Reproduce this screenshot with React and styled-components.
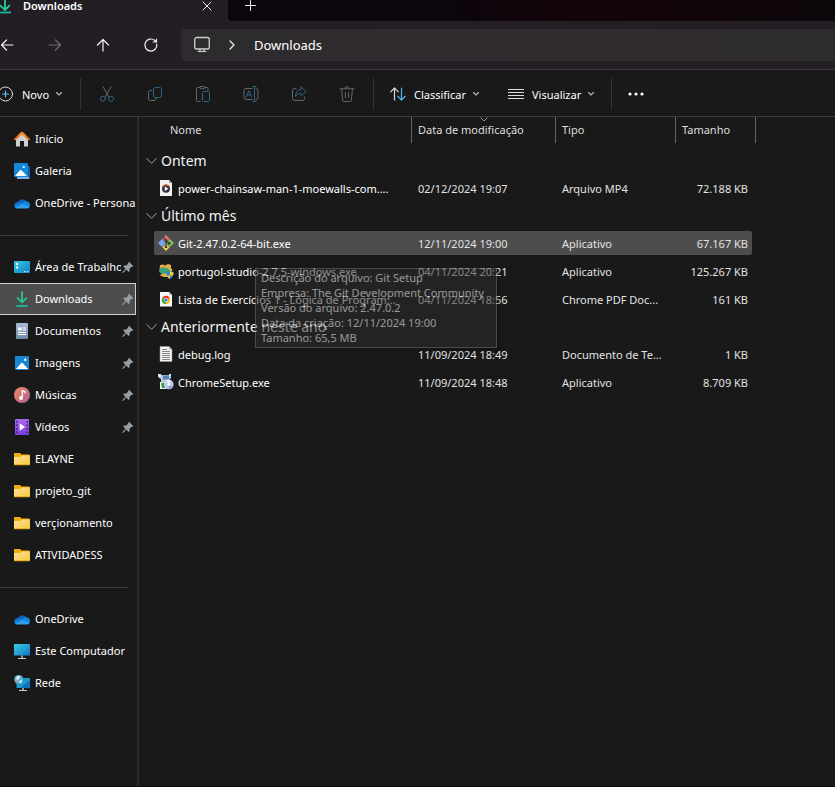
import React from "react";
import styled, { createGlobalStyle, css } from "styled-components";

const GlobalStyle = createGlobalStyle`
  * { box-sizing: border-box; }
  body {
    margin: 0;
    background: #191919;
    color: #ffffff;
    font-family: "Noto Sans", "Open Sans", sans-serif;
    font-size: 11px;
    line-height: 16px;
    overflow: hidden;
  }
  button {
    margin: 0;
    padding: 0;
    border: 0;
    background: none;
    color: inherit;
    font: inherit;
    cursor: default;
  }
  a { color: inherit; text-decoration: none; }
  svg { display: block; flex: none; }
`;

/* ---------- layout ---------- */

const Window = styled.div`
  min-height: 100vh;
  display: flex;
  flex-direction: column;
  border-bottom: 1px solid #0b0b0b;
`;

const TabStrip = styled.header`
  height: 21px;
  display: flex;
  background: #221e23;
`;

const Tab = styled.div`
  flex: none;
  width: 228px;
  height: 12px;
  padding: 0 14px 0 0;
  display: flex;
  align-items: center;
`;

const TabTitle = styled.span`
  flex: 1;
  margin-left: 11px;
  font-size: 11px;
  font-weight: 600;
`;

const TabRest = styled.div`
  flex: 1;
  padding: 0 15px;
  border-bottom-left-radius: 4px;
  background: linear-gradient(90deg, #0b060d 0%, #0c050c 35%, #130409 60%, #0c060a 100%);
`;

const StripButton = styled.button`
  width: 14px;
  height: 11px;
  display: grid;
  place-items: center;
`;

const NavBar = styled.div`
  height: 49px;
  padding: 8px 0;
  display: flex;
  align-items: center;
  border-bottom: 1px solid #3b3a3b;
  background: #221e23;
`;

const NavButtons = styled.div`
  width: 181px;
  display: flex;
  margin-left: -17px;
  margin-right: 17px;
`;

const SquareButton = styled.button`
  flex: none;
  width: 48px;
  height: 32px;
  display: grid;
  place-items: center;
  color: #f2f2f2;

  &:disabled { color: ${(p) => (p.$tinted ? "#666666" : "#6f6b70")}; }
`;

const AddressBar = styled.div`
  flex: 1;
  height: 32px;
  padding-left: 12px;
  display: flex;
  align-items: center;
  border-radius: 5px 0 0 5px;
  background: linear-gradient(90deg, #2d2b2e 0%, #322c2f 60%, #2d2c2d 100%);
  font-size: 13px;
`;

const Crumb = styled.button`
  margin-left: 19px;
`;

const CrumbChevron = styled.span`
  margin-left: 18px;
`;

const Toolbar = styled.div`
  height: 47px;
  padding-top: 2px;
  display: flex;
  align-items: center;
  border-bottom: 1px solid #3b3b3b;
  background: #191919;
`;

const ToolButton = styled.button`
  flex: none;
  width: ${(p) => p.$width}px;
  height: 32px;
  padding-left: ${(p) => p.$inset}px;
  display: flex;
  align-items: center;
  gap: 8px;

  svg:last-child { margin-left: -2px; }
`;

const ToolLabel = styled.span`
  padding-top: 2px;
`;

const Clip = styled.div`
  margin-left: -2px;
  display: flex;
`;

const Separator = styled.div`
  flex: none;
  width: 1px;
  height: 32px;
  background: #333333;
`;

const IconGroup = styled.div`
  display: flex;
  padding: 0 2px;
`;

const Body = styled.div`
  flex: 1;
  display: flex;
`;

/* ---------- sidebar ---------- */

const Sidebar = styled.nav`
  flex: none;
  width: 139px;
  margin-right: 1px;
  padding: 6px 1px 0 0;
  border-right: 2px solid #2b2b2b;
`;

const SideItem = styled.a`
  height: 32px;
  padding: 0 2px 0 14px;
  display: flex;
  align-items: center;
  gap: 5px;
  ${(p) =>
    p.$selected &&
    css`
      padding-right: 1px;
      border: 1px solid #d0d0d0;
      border-left: 0;
      background: #4d4d4d;
    `}
`;

const SideLabel = styled.span`
  flex: 1;
  min-width: 0;
  margin-right: ${(p) => (p.$bleed ? "-2px" : "0")};
  overflow: hidden;
  white-space: nowrap;
`;

const SideRule = styled.hr`
  height: 1px;
  margin: 16px 8px 15px 0;
  border: 0;
  background: #3b3b3b;
`;

const PinSlot = styled.span`
  margin-left: -4px;
`;

/* ---------- file list ---------- */

const Pane = styled.main`
  position: relative;
  flex: 1;
  min-width: 0;
`;

const FileTable = styled.table`
  display: block;
  color: #e2e2e2;
`;

const TableHead = styled.thead`
  display: block;
`;

const HeadRow = styled.tr`
  display: grid;
  grid-template-columns: 272px 144px 120px 80px;
  height: 26px;
  margin-bottom: 4px;
`;

const HeadCell = styled.th`
  position: relative;
  padding: 5px 0 0 ${(p) => (p.$first ? "30px" : "6px")};
  border-right: 1px solid #636363;
  font-weight: 400;
  text-align: left;
  color: #dedede;
`;

const SortMark = styled.span`
  position: absolute;
  top: 0;
  left: 50%;
  margin-left: -4px;
`;

const Group = styled.tbody`
  display: flex;
  flex-direction: column;
`;

const GroupRow = styled.tr`
  display: flex;
  height: 27px;
`;

const GroupCell = styled.th`
  padding: 0 0 0 6px;
  font-weight: 400;
`;

const GroupButton = styled.button`
  height: 27px;
  display: flex;
  align-items: center;
  gap: 4px;
  font-size: 14px;
  white-space: nowrap;
  color: #f4f4f4;
`;

const FileRow = styled.tr`
  display: grid;
  grid-template-columns: 258px 144px 120px 76px;
  align-items: center;
  width: 598px;
  height: 24px;
  margin: 2px 0 2px 14px;
  border-radius: 2px;
  background: ${(p) => (p.$hovered ? "#4d4d4d" : "transparent")};
`;

const Cell = styled.td`
  padding: 2px ${(p) => (p.$right ? "4px" : "10px")} 0 6px;
  overflow: hidden;
  text-overflow: ellipsis;
  white-space: nowrap;
  text-align: ${(p) => (p.$right ? "right" : "left")};
`;

const NameCell = styled.td`
  min-width: 0;
  padding: 0 10px 0 4px;
  display: flex;
  align-items: center;
  gap: 4px;
  color: #ffffff;
`;

const FileName = styled.span`
  padding-top: 2px;
  overflow: hidden;
  text-overflow: ellipsis;
  white-space: nowrap;
`;

const Tooltip = styled.div`
  position: absolute;
  left: 115px;
  top: 151px;
  width: 242px;
  padding: 1px 5px 2px;
  border: 1px solid #767676;
  background: #2c2c2c;
  opacity: 0.54;
  box-shadow: 2px 2px 3px rgba(0, 0, 0, 0.5);
  line-height: 15px;
  white-space: nowrap;
`;

/* ---------- icons ---------- */

const Line = ({ size = 16, w, h, children, ...rest }) => (
  <svg
    width={w || size}
    height={h || size}
    viewBox={`0 0 ${w || size} ${h || size}`}
    fill="none"
    stroke="currentColor"
    strokeLinecap="round"
    strokeLinejoin="round"
    aria-hidden="true"
    {...rest}
  >
    {children}
  </svg>
);

const DownloadArrow = () => (
  <Line>
    <path d="M8 1v10.2M3.6 7.2 8 11.4l4.4-4.2" stroke="#24c494" strokeWidth="1.8" />
    <path d="M2.4 15h11.2" stroke="#19b79f" strokeWidth="1.8" strokeLinecap="butt" />
  </Line>
);

const TabDownload = () => (
  <Line w={12} h={16} viewBox="4 0 12 16">
    <path d="M9 0v11M4.4 7.6 9 12l4.4-4.4" stroke="#24c494" strokeWidth="1.9" />
    <path d="M3 14.500h12" stroke="#19b79f" strokeWidth="1.8" strokeLinecap="butt" />
  </Line>
);

const Close = () => (
  <Line size={10}><path d="M1 1l8 8M9 1L1 9" stroke="#e8e8e8" /></Line>
);
const Plus = () => (
  <Line size={11}><path d="M5.5 .5v10M.5 5.5h10" stroke="#e8e8e8" /></Line>
);
const ArrowLeft = () => (
  <Line><path d="M14 8H2.5M7.5 3l-5 5 5 5" strokeWidth="1.2" /></Line>
);
const ArrowRight = () => (
  <Line><path d="M2 8h11.5M8.5 3l5 5-5 5" strokeWidth="1.2" /></Line>
);
const ArrowUp = () => (
  <Line><path d="M8 14V2.5M2.5 8L8 2.5 13.5 8" strokeWidth="1.2" /></Line>
);
const Refresh = () => (
  <Line>
    <path d="M13.8 7.2A6 6 0 1 1 11.8 3.5l1.5 1.3M13.5 2v3h-3.3" strokeWidth="1.2" />
  </Line>
);
const Monitor = () => (
  <Line w={18} h={18}>
    <rect x="1.7" y="1.5" width="14.6" height="11.5" rx="2" stroke="#cfcdd0" strokeWidth="1.3" />
    <path d="M7 13.2v2.5M11 13.200v2.5M5 15.500h8" stroke="#cfcdd0" strokeWidth="1.2" />
  </Line>
);
const ChevronRight = () => (
  <Line w={6} h={10}><path d="M1 1l4 4-4 4" stroke="#ededed" strokeWidth="1.3" /></Line>
);
const ChevronDown = () => (
  <Line w={8} h={6}><path d="M1.5 1.5L4 4l2.5-2.5" stroke="#b4b4b4" strokeWidth="1.1" /></Line>
);
const GroupChevron = () => (
  <Line w={11} h={8}><path d="M.7 1.5l4.8 4.8 4.8-4.8" stroke="#a4a4a4" /></Line>
);
const SortDown = () => (
  <Line w={8} h={5}><path d="M.8.8L4 4 7.2.8" stroke="#8e8e8e" /></Line>
);
const NewIcon = () => (
  <Line>
    <circle cx="7.500" cy="8" r="7" stroke="#dedede" />
    <path d="M7.500 5v6M4.500 8h6" stroke="#58c0ee" strokeWidth="1.2" />
  </Line>
);
const Cut = () => (
  <Line>
    <path d="M4 .7l5.600 10M12 .7l-5.600 10" />
    <circle cx="3.800" cy="12.800" r="2.500" stroke="#2f6380" />
    <circle cx="12.200" cy="12.800" r="2.500" stroke="#2f6380" />
  </Line>
);
const Copy = () => (
  <Line>
    <path d="M5 4.500H3.500a2 2 0 0 0-2 2v6a2 2 0 0 0 2 2H7a2 2 0 0 0 2-2V12" />
    <rect x="6.500" y="1.500" width="8" height="10" rx="2" stroke="#2f6380" />
  </Line>
);
const Paste = () => (
  <Line>
    <path d="M5 15.500H2.500a1 1 0 0 1-1-1v-12a1 1 0 0 1 1-1H5M10 1.500h2a1 1 0 0 1 1 1V4" />
    <rect x="4.800" y=".5" width="5.400" height="2.200" rx="1" />
    <rect x="7.500" y="5.500" width="7" height="10" rx="1" stroke="#2f6380" />
  </Line>
);
const Rename = () => (
  <Line>
    <path d="M9 2.500H3a2 2 0 0 0-2 2v7a2 2 0 0 0 2 2h6M13 2.500a2 2 0 0 1 2 2v7a2 2 0 0 1-2 2" />
    <path d="M11.500 1v14M9.800.6h3.400M9.800 15.400h3.400M3.300 11L6 4.500 8.700 11M4.200 9h3.600" stroke="#2f6380" />
  </Line>
);
const Share = () => (
  <Line>
    <path d="M5 2.500H3.500a2 2 0 0 0-2 2v8a2 2 0 0 0 2 2h8a2 2 0 0 0 2-2V11" />
    <path d="M10 .800l5.200 4.700-5.200 4.700V7.500C7.500 7.300 5.700 8.500 4.500 10.500c0-3.800 2-6.800 5.500-7.200z" stroke="#2f6380" />
  </Line>
);
const Trash = () => (
  <Line>
    <path d="M1 2.800h14M5.800 2.600a2.200 1.900 0 0 1 4.400 0M2.600 3l1 11.200a1.400 1.400 0 0 0 1.400 1.300h6a1.400 1.400 0 0 0 1.400-1.300L13.400 3M6.500 6.500v5M9.500 6.500v5" />
  </Line>
);
const Sort = () => (
  <Line>
    <path d="M4.500 14V2M.7 5.800L4.500 2l3.800 3.800" stroke="#d6d6d6" strokeWidth="1.2" />
    <path d="M11.500 2v12M7.700 10.200l3.800 3.800 3.800-3.800" stroke="#4fb8ea" strokeWidth="1.2" />
  </Line>
);
const Lines = () => (
  <Line>
    <path d="M0 3.500h16M0 6.500h16M0 9.500h16M0 12.500h16" stroke="#dddddd" strokeLinecap="butt" />
  </Line>
);
const Dots = () => (
  <Line w={18} h={4}>
    <g fill="#ffffff" stroke="none">
      <circle cx="3" cy="2" r="1.600" />
      <circle cx="9" cy="2" r="1.600" />
      <circle cx="15" cy="2" r="1.600" />
    </g>
  </Line>
);

const Art = ({ children }) => (
  <svg width="16" height="16" viewBox="0 0 16 16" aria-hidden="true">{children}</svg>
);

const Home = () => (
  <Art>
    <path d="M2 7.500L8 2l6 5.500V15a.6.6 0 0 1-.6.600H10V10H6v5.600H2.600A.6.6 0 0 1 2 15z" fill="#cfcfcf" />
    <path d="M1 8.300L8 1.700l7 6.600" fill="none" stroke="#ea6a1c" strokeWidth="2" strokeLinecap="round" strokeLinejoin="round" />
    <path d="M4.500 5L8 1.700 11.500 5" fill="none" stroke="#f58a1f" strokeWidth="2" strokeLinejoin="round" />
  </Art>
);
const Gallery = () => (
  <Art>
    <path d="M3 3h12a1 1 0 0 1 1 1v11a1 1 0 0 1-1 1H4a1 1 0 0 1-1-1z" fill="#0e5fae" />
    <path d="M3 14h12v2H4a1 1 0 0 1-1-1z" fill="#7fb0e6" />
    <rect width="14" height="14" rx="1" y="0" fill="#1488d8" />
    <path d="M1 13l5.200-6 1 .1L13 13z" fill="#ffffff" />
    <circle cx="9.800" cy="4" r="1.100" fill="#ffffff" />
  </Art>
);
const Cloud = () => (
  <Art>
    <path d="M3.500 8A5 5 0 0 1 12.500 6.600L11 11H3z" fill="#0a63b8" />
    <path d="M3.800 6.900A3.600 3.600 0 0 0 1 12.500L9.500 9z" fill="#1279d2" />
    <path d="M12.200 6.500a3.500 3.500 0 0 1 3.600 4.600l-3 1.400L6 8.700c2-.2 3.800-2.400 6.200-2.200z" fill="#1886dc" />
    <path d="M.8 12.200L8.600 8.900l7.200 2.500a2.700 2.700 0 0 1-2.500 2.100H3.600a3.300 3.300 0 0 1-2.800-1.300z" fill="#2aa4f0" />
  </Art>
);
const Desktop = () => (
  <Art>
    <defs>
      <linearGradient id="desk" x1="0" y1="0" x2="1" y2="1">
        <stop offset="0" stopColor="#35c8de" />
        <stop offset="1" stopColor="#1481c8" />
      </linearGradient>
    </defs>
    <rect y="2" width="16" height="12" rx="1" fill="url(#desk)" />
    <path d="M2 4h2v2H2zM2 7.500h2v2H2z" fill="#ffffff" />
    <path d="M10 12h1.500v1.200H10zM13 12h1.500v1.200H13z" fill="#c9e8f8" />
  </Art>
);
const Documents = () => (
  <Art>
    <defs>
      <linearGradient id="doc" x1="0" y1="0" x2="0" y2="1">
        <stop offset="0" stopColor="#a9bdd2" />
        <stop offset="1" stopColor="#6d88a8" />
      </linearGradient>
    </defs>
    <rect x="2" width="12" height="16" rx="1" fill="url(#doc)" />
    <path d="M4 4.500h3.500v3H4z" fill="#ffffff" />
    <path d="M8.500 5H12M8.500 7H12M4 9.500h8M4 11.500h8" stroke="#ffffff" />
  </Art>
);
const Images = () => (
  <Art>
    <rect x="1" y="1" width="14" height="14" rx="1" fill="#1787d6" />
    <path d="M2 14l5.300-6h1.400L14 14z" fill="#ffffff" />
    <circle cx="11.300" cy="4.700" r="1.200" fill="#ffffff" />
  </Art>
);
const Music = () => (
  <Art>
    <defs>
      <linearGradient id="mus" x1="0" y1="0" x2="1" y2="1">
        <stop offset="0" stopColor="#ee8a55" />
        <stop offset="1" stopColor="#b0609f" />
      </linearGradient>
    </defs>
    <circle cx="8" cy="8" r="8" fill="url(#mus)" />
    <circle cx="7" cy="11" r="1.900" fill="#ffffff" />
    <path d="M8.300 11V3.600l2.700 1v1.600" fill="none" stroke="#ffffff" strokeWidth="1.300" />
  </Art>
);
const Videos = () => (
  <Art>
    <defs>
      <linearGradient id="vid" x1="0" y1="0" x2="0" y2="1">
        <stop offset="0" stopColor="#a869ee" />
        <stop offset="1" stopColor="#7c3fd8" />
      </linearGradient>
    </defs>
    <rect x="1" width="14" height="16" rx="1" fill="url(#vid)" />
    <path d="M2 2h1.500v1.500H2zM2 5.500h1.500V7H2zM2 9h1.500v1.500H2zM2 12.500h1.500V14H2zM12.500 2H14v1.500h-1.500zM12.500 5.500H14V7h-1.500zM12.500 9H14v1.500h-1.500zM12.500 12.500H14V14h-1.500z" fill="#3c1c80" />
    <path d="M5.700 4.300L11 8l-5.300 3.700z" fill="#ffffff" />
  </Art>
);
const Folder = () => (
  <Art>
    <defs>
      <linearGradient id="fold" x1="0" y1="0" x2="1" y2="1">
        <stop offset="0" stopColor="#ffe39a" />
        <stop offset="1" stopColor="#fbc63c" />
      </linearGradient>
    </defs>
    <path d="M0 3a1 1 0 0 1 1-1h5l1.500 1.500H15a1 1 0 0 1 1 1V8H0z" fill="#f2ab12" />
    <path d="M0 6h6.500L8 4.500h7a1 1 0 0 1 1 1V13a1 1 0 0 1-1 1H1a1 1 0 0 1-1-1z" fill="url(#fold)" />
    <path d="M0 13a1 1 0 0 0 1 1.300h14a1 1 0 0 0 1-1z" fill="#e9a920" />
  </Art>
);
const Computer = () => (
  <Art>
    <defs>
      <linearGradient id="pc" x1="0" y1="0" x2="1" y2="1">
        <stop offset="0" stopColor="#38d0e4" />
        <stop offset="1" stopColor="#1173c4" />
      </linearGradient>
    </defs>
    <rect y="1" width="16" height="11.500" rx=".6" fill="url(#pc)" />
    <path d="M7 12.500h2V15H7z" fill="#8f9aa3" />
    <path d="M4 15h8v1H4z" fill="#c2ccd4" />
  </Art>
);
const Network = () => (
  <Art>
    <rect x="2.500" y="3" width="13.500" height="10" rx=".6" fill="#1b9bd0" />
    <path d="M16 5v8H6z" fill="#1273bd" />
    <path d="M8 13h2v2H8z" fill="#8f9aa3" />
    <path d="M5 15h8v1H5z" fill="#c2ccd4" />
    <circle cx="4.700" cy="4.500" r="4.500" fill="#6fa9c9" />
    <path d="M2 2.200c1.500-1.500 3-1.500 4-1L5.500 3.500 3 5.500zM5 6l2.800-1L8 6.800 6 8.500z" fill="#d7ebf5" />
  </Art>
);
const Pin = () => (
  <svg width="12" height="12" viewBox="0 0 12 12" aria-hidden="true">
    <path d="M7 .8L11.200 5l-.9.900-.8-.2-2 2 .1 2.200-1 1-2.300-2.300L1 12l-.8-.2.2-.8 3.100-3.300L1.200 5.400l1-1 2.200.1 2-2-.3-.8z" fill="#96a0a8" />
  </svg>
);
const Mp4 = () => (
  <Art>
    <path d="M2 0h9l3 3v13H2z" fill="#f2f2f2" />
    <path d="M11 0v3h3z" fill="#9b9b9b" />
    <circle cx="8" cy="8.800" r="4" fill="#34323e" />
    <path d="M4.500 7a4 4 0 0 1 6-1.300" stroke="#e2643d" fill="none" strokeWidth="1.300" />
    <path d="M6.800 6.600l3.600 2.200-3.600 2.200z" fill="#ffffff" />
  </Art>
);
const GitIcon = () => (
  <Art>
    <path d="M8 0l3.700 3.700L8 7.400 4.300 3.700z" fill="#f07068" />
    <path d="M4 4l3.700 4L4 12 0 8z" fill="#74a8f2" />
    <path d="M12 4l4 4-4 4-3.700-4z" fill="#7cc65c" />
    <path d="M8 8.600l3.700 3.700L8 16l-3.700-3.700z" fill="#f3cf5b" />
    <path d="M5.500 2.500L8 5v7M8 5.500l3.200 3" fill="none" stroke="#3a3a3a" strokeWidth="1.200" />
    <circle cx="8" cy="5.200" r="1.300" fill="#3a3a3a" />
    <circle cx="11.400" cy="8.400" r="1.300" fill="#3a3a3a" />
    <circle cx="8" cy="12" r="1.300" fill="#3a3a3a" />
  </Art>
);
const Portugol = () => (
  <Art>
    <path d="M2 2l3.500-.5 1.500 1L10 1l3 1v3l1.500 2-1 2 1 5L6 14l-4-1.500L4 10 1.500 8z" fill="#e8ab4a" />
    <path d="M1.500 6.500C3 4 6 3.500 8 5.500l2-.5 3.500 5-3 1.500-3-1L4 11 1 9z" fill="#3ba276" />
    <path d="M8.500 9.500L12 8.500l3.500 1c0 3-1 5.200-3.500 6.500-2.500-1.300-3.500-3.500-3.500-6.500z" fill="#2b84d8" />
    <path d="M12 8.500l3.500 1c0 1.200-.1 2-.5 3h-3zM8.900 12.500H12V16c-1.700-.9-2.700-2-3.100-3.500z" fill="#f7cf2e" />
  </Art>
);
const ChromePdf = () => (
  <Art>
    <path d="M2 1h9l3 3v11.500H2z" fill="#f7f7f7" />
    <path d="M11 1v3h3z" fill="#c6c6c6" />
    <circle cx="8" cy="9" r="4.200" fill="#fbc116" />
    <path d="M8 9L4.400 6.800A4.200 4.200 0 0 1 11.700 7z" fill="#e33b2e" />
    <path d="M8 9l-3.700-2A4.200 4.200 0 0 0 7.600 13.200z" fill="#2da94f" />
    <circle cx="8" cy="9" r="2.100" fill="#ffffff" />
    <circle cx="8" cy="9" r="1.600" fill="#3277e0" />
  </Art>
);
const TextFile = () => (
  <Art>
    <path d="M2 .5h9l3 3v12H2z" fill="#f4f4f4" stroke="#9b9b9b" strokeWidth=".5" />
    <path d="M11 .5v3h3z" fill="#b8b8b8" />
    <path d="M4 3.500h5M4 5.500h8M4 7.500h8M4 9.500h8M4 11.500h8M4 13.500h8" stroke="#7c7c7c" strokeWidth=".9" />
  </Art>
);
const Installer = () => (
  <Art>
    <path d="M1 1h12v3l-2 2v6H3V5L1 4z" fill="#bccbd9" />
    <path d="M0 0h3v3H0zM11 0h2v2h-2z" fill="#dfe8ef" />
    <path d="M5 1.500h6v4H5z" fill="#4a85bd" />
    <path d="M2 8h6v7H2z" fill="#eef2f5" />
    <path d="M3 9.500l2.500-1.200L7 11v3H4z" fill="#3c9c4d" />
    <circle cx="10.800" cy="10.500" r="4.800" fill="#c3c9ef" />
    <path d="M10.800 10.500L8 6.600a4.800 4.800 0 0 1 5-.3z" fill="#e9f3fb" />
    <path d="M10.800 10.500l4.200 2.300a4.800 4.800 0 0 1-4.500 2.500z" fill="#8fa4dd" />
    <circle cx="10.800" cy="10.500" r="1.300" fill="#ffffff" />
  </Art>
);

/* ---------- data ---------- */

const sections = [
  [
    { icon: Home, label: "Início" },
    { icon: Gallery, label: "Galeria" },
    { icon: Cloud, label: "OneDrive - Persona", bleed: true },
  ],
  [
    { icon: Desktop, label: "Área de Trabalho", pinned: true },
    { icon: DownloadArrow, label: "Downloads", pinned: true, selected: true },
    { icon: Documents, label: "Documentos", pinned: true },
    { icon: Images, label: "Imagens", pinned: true },
    { icon: Music, label: "Músicas", pinned: true },
    { icon: Videos, label: "Vídeos", pinned: true },
    { icon: Folder, label: "ELAYNE" },
    { icon: Folder, label: "projeto_git" },
    { icon: Folder, label: "verçionamento" },
    { icon: Folder, label: "ATIVIDADESS" },
  ],
  [
    { icon: Cloud, label: "OneDrive" },
    { icon: Computer, label: "Este Computador" },
    { icon: Network, label: "Rede" },
  ],
];

const groups = [
  {
    title: "Ontem",
    files: [
      { icon: Mp4, name: "power-chainsaw-man-1-moewalls-com....", date: "02/12/2024 19:07", type: "Arquivo MP4", size: "72.188 KB" },
    ],
  },
  {
    title: "Último mês",
    files: [
      { icon: GitIcon, name: "Git-2.47.0.2-64-bit.exe", date: "12/11/2024 19:00", type: "Aplicativo", size: "67.167 KB", hovered: true },
      { icon: Portugol, name: "portugol-studio-2.7.5-windows.exe", date: "04/11/2024 20:21", type: "Aplicativo", size: "125.267 KB" },
      { icon: ChromePdf, name: "Lista de Exercícios 1 - Lógica de Program...", date: "04/11/2024 18:56", type: "Chrome PDF Doc...", size: "161 KB" },
    ],
  },
  {
    title: "Anteriormente neste ano",
    files: [
      { icon: TextFile, name: "debug.log", date: "11/09/2024 18:49", type: "Documento de Te...", size: "1 KB" },
      { icon: Installer, name: "ChromeSetup.exe", date: "11/09/2024 18:48", type: "Aplicativo", size: "8.709 KB" },
    ],
  },
];

const fileActions = [
  ["Recortar", Cut],
  ["Copiar", Copy],
  ["Colar", Paste],
  ["Renomear", Rename],
  ["Compartilhar", Share],
  ["Excluir", Trash],
];

const tooltipLines = [
  "Descrição do arquivo: Git Setup",
  "Empresa: The Git Development Community",
  "Versão do arquivo: 2.47.0.2",
  "Data da criação: 12/11/2024 19:00",
  "Tamanho: 65,5 MB",
];

/* ---------- app ---------- */

export default function App() {
  return (
    <Window>
      <GlobalStyle />
      <TabStrip>
        <Tab>
          <TabDownload />
          <TabTitle>Downloads</TabTitle>
          <StripButton aria-label="Fechar guia"><Close /></StripButton>
        </Tab>
        <TabRest>
          <StripButton aria-label="Nova guia"><Plus /></StripButton>
        </TabRest>
      </TabStrip>

      <NavBar>
        <NavButtons>
          <SquareButton aria-label="Voltar"><ArrowLeft /></SquareButton>
          <SquareButton aria-label="Avançar" disabled><ArrowRight /></SquareButton>
          <SquareButton aria-label="Acima"><ArrowUp /></SquareButton>
          <SquareButton aria-label="Atualizar"><Refresh /></SquareButton>
        </NavButtons>
        <AddressBar>
          <Monitor />
          <CrumbChevron><ChevronRight /></CrumbChevron>
          <Crumb>Downloads</Crumb>
        </AddressBar>
      </NavBar>

      <Toolbar>
        <Clip>
          <ToolButton $width={82} $inset={0}><NewIcon /><ToolLabel>Novo</ToolLabel><ChevronDown /></ToolButton>
        </Clip>
        <Separator />
        <IconGroup>
          {fileActions.map(([label, Icon]) => (
            <SquareButton key={label} aria-label={label} disabled $tinted><Icon /></SquareButton>
          ))}
        </IconGroup>
        <Separator />
        <ToolButton $width={118} $inset={16}><Sort /><ToolLabel>Classificar</ToolLabel><ChevronDown /></ToolButton>
        <ToolButton $width={119} $inset={16}><Lines /><ToolLabel>Visualizar</ToolLabel><ChevronDown /></ToolButton>
        <Separator />
        <SquareButton aria-label="Ver mais"><Dots /></SquareButton>
      </Toolbar>

      <Body>
        <Sidebar>
          {sections.map((items, i) => (
            <React.Fragment key={i}>
              {i > 0 && <SideRule />}
              {items.map(({ icon: Icon, label, pinned, selected, bleed }) => (
                <SideItem key={label} href="#" $selected={selected}>
                  <Icon />
                  <SideLabel $bleed={bleed}>{label}</SideLabel>
                  {pinned && <PinSlot><Pin /></PinSlot>}
                </SideItem>
              ))}
            </React.Fragment>
          ))}
        </Sidebar>

        <Pane>
          <FileTable>
            <TableHead>
              <HeadRow>
                <HeadCell $first>Nome</HeadCell>
                <HeadCell aria-sort="descending">
                  Data de modificação
                  <SortMark><SortDown /></SortMark>
                </HeadCell>
                <HeadCell>Tipo</HeadCell>
                <HeadCell>Tamanho</HeadCell>
              </HeadRow>
            </TableHead>
            {groups.map(({ title, files }) => (
              <Group key={title}>
                <GroupRow>
                  <GroupCell colSpan={4}>
                    <GroupButton aria-expanded="true"><GroupChevron />{title}</GroupButton>
                  </GroupCell>
                </GroupRow>
                {files.map(({ icon: Icon, name, date, type, size, hovered }) => (
                  <FileRow key={name} $hovered={hovered}>
                    <NameCell><Icon /><FileName>{name}</FileName></NameCell>
                    <Cell>{date}</Cell>
                    <Cell>{type}</Cell>
                    <Cell $right>{size}</Cell>
                  </FileRow>
                ))}
              </Group>
            ))}
          </FileTable>
          <Tooltip role="tooltip">
            {tooltipLines.map((line) => <div key={line}>{line}</div>)}
          </Tooltip>
        </Pane>
      </Body>
    </Window>
  );
}
